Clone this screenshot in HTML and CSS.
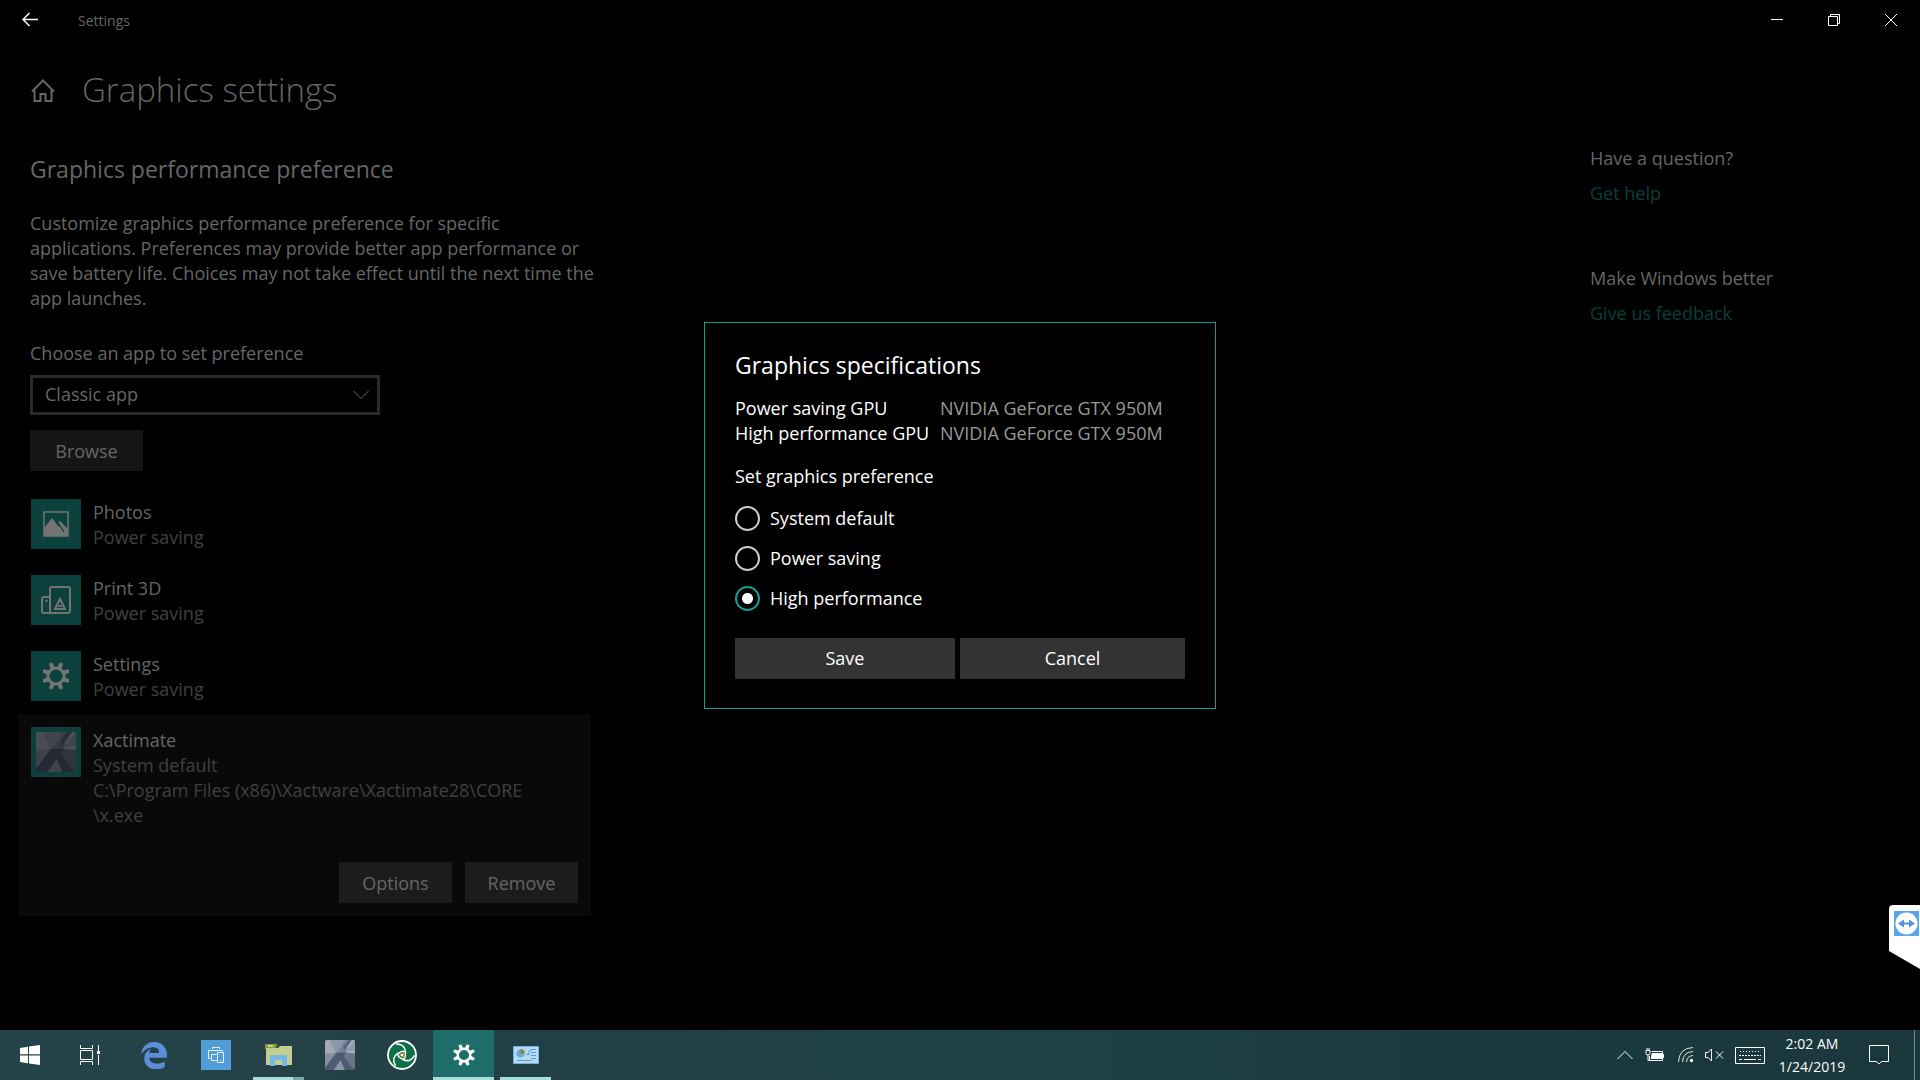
FILE: index.html
```html
<!DOCTYPE html>
<html lang="en">
<head>
<meta charset="utf-8">
<meta name="viewport" content="width=device-width, initial-scale=1">
<title>Settings</title>
<link rel="stylesheet" href="styles.css">
</head>
<body>
<svg class="defs" aria-hidden="true">
  <defs>
    <linearGradient id="x-base" x1="0" y1="0" x2="1" y2="1">
      <stop offset="0" stop-color="#9aa6b5"/><stop offset=".5" stop-color="#717f94"/><stop offset="1" stop-color="#4a586e"/>
    </linearGradient>
    <symbol id="gear" viewBox="0 0 28 28">
      <circle cx="14" cy="14" r="8" fill="none" stroke="currentColor" stroke-width="3"/>
      <g fill="currentColor">
        <path id="tooth" d="M12.2 0h3.6l.6 5.5h-4.800z" transform="rotate(22.5 14 14)"/>
        <use href="#tooth" transform="rotate(45 14 14)"/><use href="#tooth" transform="rotate(90 14 14)"/>
        <use href="#tooth" transform="rotate(135 14 14)"/><use href="#tooth" transform="rotate(180 14 14)"/>
        <use href="#tooth" transform="rotate(225 14 14)"/><use href="#tooth" transform="rotate(270 14 14)"/>
        <use href="#tooth" transform="rotate(315 14 14)"/>
      </g>
    </symbol>
    <symbol id="xact" viewBox="0 0 40 40">
      <clipPath id="x-clip"><rect width="40" height="40" rx="3"/></clipPath>
      <g clip-path="url(#x-clip)">
        <rect width="40" height="40" fill="url(#x-base)"/>
        <path d="M0 0h6l9 17L0 19z" fill="#a3aab4"/>
        <path d="M6 0h20l-4 9-7 8z" fill="#8b98ac"/>
        <path d="M31 0h9v18l-12-1z" fill="#a9b0b9"/>
        <path d="M40 0v14l-14 2z" fill="#8f9cb0"/>
        <path d="M24 9L31 0h5L26 14z" fill="#5a677c"/>
        <path d="M0 20l15-3 2 3L0 38z" fill="#858f9d"/>
        <path d="M40 19l-13-2-2 3 14 20h1z" fill="#6a7687"/>
        <path d="M15 17l13 0-3 4 11 19H28l-8-13-9 13H0v-3z" fill="#4d5b75"/>
        <path d="M12 40l9-13 5 13z" fill="#8d98a8"/>
      </g>
    </symbol>
  </defs>
</svg>

<div class="window">
  <header class="titlebar">
    <button class="caption-btn" aria-label="Back"><svg width="16" height="16" viewBox="0 0 16 16"><path d="M16 7.500H1M7.500 1L1 7.500 7.500 14"/></svg></button>
    <span class="titlebar-name">Settings</span>
    <div class="caption-group">
      <button class="caption-btn" aria-label="Minimize"><svg width="12" height="12" viewBox="0 0 12 12"><path class="thin" d="M0 5.500h12"/></svg></button>
      <button class="caption-btn" aria-label="Restore"><svg width="12" height="12" viewBox="0 0 12 12"><path class="thin" d="M.5 2.500h9v9h-9zM2.500 2.500v-2h9v9h-2"/></svg></button>
      <button class="caption-btn" aria-label="Close"><svg width="12" height="12" viewBox="0 0 12 12"><path class="thin" d="M0 0l12 12M12 0L0 12"/></svg></button>
    </div>
  </header>

  <div class="page-head">
    <svg class="home" width="24" height="24" viewBox="0 0 24 24"><path d="M1 13.500L12 2.500l11 11M3.500 11.500V23h6v-7h5v7h6V11.500"/></svg>
    <h1>Graphics settings</h1>
  </div>

  <div class="columns">
    <main class="content">
      <h2>Graphics performance preference</h2>
      <p class="intro">Customize graphics performance preference for specific applications. Preferences may provide better app performance or save battery life. Choices may not take effect until the next time the app launches.</p>
      <label class="field-label" for="app-kind">Choose an app to set preference</label>
      <div class="select-wrap">
        <select id="app-kind"><option>Classic app</option><option>Universal app</option></select>
        <svg class="chevron" width="16" height="10" viewBox="0 0 16 10"><path d="M.5 1L8 8.500 15.500 1"/></svg>
      </div>
      <button class="btn browse">Browse</button>

      <ul class="apps">
        <li class="app">
          <div class="tile"><svg width="26" height="26" viewBox="0 0 26 26"><path fill="none" stroke="currentColor" stroke-width="1.500" d="M1 1h24v24H1z"/><path fill="currentColor" d="M1 17L9 7l7 9 1-1-2-4 2-1 8 8v7H1z"/><path stroke="#0b403c" stroke-width="1.200" fill="none" d="M15 12l6 9"/></svg></div>
          <div class="app-text"><div class="name">Photos</div><div class="pref">Power saving</div></div>
        </li>
        <li class="app">
          <div class="tile"><svg width="30" height="28" viewBox="0 0 30 28"><g fill="none" stroke="currentColor" stroke-width="2"><rect x="9" y="1" width="20" height="26" rx="2"/><path d="M9 11H3q-2 0-2 2v12q0 2 2 2h7M19 13l-5 10h10zM17 20h4"/></g><circle cx="5.500" cy="15" r="1.200" fill="currentColor"/></svg></div>
          <div class="app-text"><div class="name">Print 3D</div><div class="pref">Power saving</div></div>
        </li>
        <li class="app">
          <div class="tile"><svg width="28" height="28"><use href="#gear"/></svg></div>
          <div class="app-text"><div class="name">Settings</div><div class="pref">Power saving</div></div>
        </li>
        <li class="app selected">
          <div class="tile"><svg class="dim" width="40" height="40"><use href="#xact"/></svg></div>
          <div class="app-text"><div class="name">Xactimate</div><div class="pref">System default<br>C:\Program Files (x86)\Xactware\Xactimate28\CORE<wbr>\x.exe</div></div>
          <div class="actions"><button class="btn">Options</button><button class="btn">Remove</button></div>
        </li>
      </ul>
    </main>

    <aside class="help">
      <section><h3>Have a question?</h3><a href="#help">Get help</a></section>
      <section><h3>Make Windows better</h3><a href="#feedback">Give us feedback</a></section>
    </aside>
  </div>

  <div class="overlay">
    <form class="dialog" role="dialog" aria-labelledby="dlg-title">
      <h2 id="dlg-title">Graphics specifications</h2>
      <dl class="specs">
        <dt>Power saving GPU</dt><dd>NVIDIA GeForce GTX 950M</dd>
        <dt>High performance GPU</dt><dd>NVIDIA GeForce GTX 950M</dd>
      </dl>
      <fieldset>
        <legend>Set graphics preference</legend>
        <label><input type="radio" name="gpu">System default</label>
        <label><input type="radio" name="gpu">Power saving</label>
        <label><input type="radio" name="gpu" checked>High performance</label>
      </fieldset>
      <div class="dialog-buttons"><button type="button" class="btn">Save</button><button type="button" class="btn">Cancel</button></div>
    </form>
  </div>

  <button class="teamviewer" aria-label="TeamViewer">
    <svg width="31" height="64" viewBox="0 0 31 64"><path d="M4 0h27v64L0 46V4q0-4 4-4z" fill="#fff"/><rect x="5" y="6" width="25" height="25" fill="#58a6ea"/><circle cx="17.500" cy="18.500" r="11" fill="#fff"/><path d="M9 18.500l6-4v3h5v-3l6 4-6 4v-3h-5v3z" fill="#5a8fe0"/></svg>
  </button>
</div>

<footer class="taskbar">
  <nav class="tasks">
    <button class="task start" aria-label="Start"><svg width="20" height="20" viewBox="0 0 20 20"><path fill="#fff" d="M0 3l8-1.200V9.300H0zM9 1.600L20 0v9.300H9zM0 10.500h8V18.200L0 17zM9 10.500h11V20L9 18.400z"/></svg></button>
    <button class="task view" aria-label="Task View"><svg width="20" height="20" viewBox="0 0 20 20"><path fill="none" stroke="#fff" d="M.5 0v3.500h12V0M.5 20v-3.500h12V20M.5 5.500h12v9H.5zM18.500 0v6M18.500 10v10"/><path fill="#fff" d="M17 6h3v3h-3z"/></svg></button>
    <button class="task" aria-label="Microsoft Edge"><svg width="26" height="27" viewBox="25 8 462 492" preserveAspectRatio="none"><path fill="#5b8fd8" d="M486.286 243.671c0-44.032-7.754-84.465-28.801-122.405C416.498 47.879 343.912 8.001 258.893 8.001 118.962 7.724 40.617 113.214 26.056 227.679c42.429-61.312 117.073-121.376 220.375-124.966 0 0 109.666 0 99.419 104.957H169.997c6.369-37.386 18.554-58.986 34.339-78.926-75.048 34.893-121.850 96.096-120.742 188.315.83 71.448 50.124 144.836 120.743 171.976 83.357 31.847 192.776 7.200 240.132-21.324V363.307c-80.864 56.494-270.871 60.925-272.255-67.572h314.073z"/></svg></button>
    <button class="task" aria-label="Device assistant"><svg width="30" height="30" viewBox="0 0 30 30"><path fill="#519dd6" d="M0 0h30v30H0z"/><path fill="none" stroke="#e6f3fc" d="M11.500 9V7.500h7V9M9.500 18.500h-2v-8h14v1M15.500 14.500h-5v6h5.500M16.500 12.500h6v10h-6z"/><path fill="#e6f3fc" d="M19 20h1v1h-1z"/></svg></button>
    <button class="task open stacked" aria-label="File Explorer"><svg width="27" height="22" viewBox="0 0 27 22"><path fill="#8c9b3b" d="M1 0h10l2 2h-2v3H0V1z"/><path fill="#c1cd91" d="M1 4h12l2-2h12v19H1z"/><path fill="#fff" d="M3 1.500h5v1H3z"/><path fill="#76b7e3" d="M5 22V12.500Q5 11 6.500 11h14q1.500 0 1.500 1.500V22h-5v-6h-7v6z"/></svg></button>
    <button class="task" aria-label="Xactimate"><svg width="30" height="30"><use href="#xact"/></svg></button>
    <button class="task" aria-label="Shutter"><svg width="30" height="30" viewBox="0 0 30 30"><circle cx="15" cy="15" r="14" fill="#0c7048" stroke="#fff" stroke-width="1.800"/><g fill="none" stroke="#fff" stroke-width="1.500"><path id="blade" d="M9 4Q18 4 18.500 12q-4-2-7 1.500"/><use href="#blade" transform="rotate(120 15 15)"/><use href="#blade" transform="rotate(240 15 15)"/></g><path fill="#b59a52" d="M11.500 15l6-3.500v7z"/><path fill="#fff" d="M14 14h2v2h-2z"/></svg></button>
    <button class="task open active" aria-label="Settings"><svg width="22" height="22"><use href="#gear"/></svg></button>
    <button class="task open" aria-label="Control Panel"><svg width="26" height="18" viewBox="0 0 26 18"><path fill="#b4dcf8" stroke="#79b0e2" d="M.5.500h25v17H.5z"/><circle cx="7.500" cy="7.500" r="4" fill="#70a8dc"/><path fill="#7b8b3c" d="M7.500 7.500V3a4.500 4.500 0 0 1 4.500 4.500z"/><path stroke="#5b9bd5" fill="none" d="M13 8.500h3v-4h2M18 3.500h5M18 6.500h5M18 9.500h5M18 12.500h5M4 14.500h15"/><path fill="#c5a550" d="M12 13.500h2v2h-2z"/></svg></button>
  </nav>
  <div class="tray">
    <svg width="16" height="10" viewBox="0 0 16 10"><path d="M.5 9L8 1.500 15.500 9"/></svg>
    <svg class="battery" width="20" height="14" viewBox="0 0 20 14"><path d="M6.500 3.500h11v9h-13V8M18.500 6v4M1 2.500h4v3Q5 7 3 7T1 5.500zM2 0v2M4 0v2M3 7v5.500h2"/><path fill="#fff" d="M7 5h10v6H6V8z"/></svg>
    <svg class="wifi" width="16" height="16" viewBox="0 0 16 16"><g opacity=".85"><path d="M.5 15Q1 1 15 .5M4.500 15Q5 5 15 4.500M8.500 15Q9 9 15 8.500"/></g><circle cx="13.500" cy="13.500" r="1.700" fill="#fff" stroke="none"/></svg>
    <svg class="volume" width="19" height="14" viewBox="0 0 19 14"><path d="M.5 4.500h2.500L6.500 1v12L3 9.500H.5zM11 3.500l7 7M18 3.500l-7 7"/></svg>
    <svg class="keyboard" width="30" height="17" viewBox="0 0 30 17"><path d="M.5.500h29v16H.5z"/><path stroke-dasharray="1 2" d="M5 4.500h20"/><path stroke-dasharray="2 1" d="M4 8.500h22"/><path d="M4 12.500h3M9 12.500h12M23 12.500h3"/></svg>
    <div class="clock"><span>2:02 AM</span><span>1/24/2019</span></div>
    <svg class="notify" width="20" height="20" viewBox="0 0 20 20"><path d="M.5.500h19v16h-7L10 19l-2.500-2.500h-7z"/></svg>
  </div>
</footer>
</body>
</html>
```
FILE: styles.css
```css
* { box-sizing: border-box; }

body {
  margin: 0;
  min-height: 100vh;
  display: flex;
  flex-direction: column;
  background: #000;
  color: #666;
  font-family: "Open Sans", "Noto Sans", sans-serif;
  font-size: 18px;
  line-height: 25px;
}

h1, h2, h3, p, dl, dd, ul, fieldset, legend { margin: 0; padding: 0; border: 0; font-weight: 400; }
h3 { font-size: 18px; }
button, select, input { font: inherit; color: inherit; margin: 0; }
button { border: 0; padding: 0; background: none; }
svg { display: block; flex: none; }
.defs { position: absolute; width: 0; height: 0; }

.window { position: relative; flex: 1; display: flex; flex-direction: column; }

.titlebar { display: flex; align-items: center; height: 40px; padding-right: 1px; font-size: 14px; }
.titlebar-name { margin-left: 18px; }
.caption-btn { display: flex; align-items: center; justify-content: center; width: 57px; height: 40px; }
.titlebar > .caption-btn { width: 60px; }
.caption-btn path { fill: none; stroke: #fff; stroke-width: 1.5; }
.caption-btn path.thin { stroke-width: 1; }
.caption-group { display: flex; margin-left: auto; }

.page-head { display: flex; align-items: center; gap: 27px; padding: 25px 31px 0; }
.home path { fill: none; stroke: #666; stroke-width: 2; }
h1 { font-size: 33px; font-weight: 300; line-height: 50px; }

.columns { display: flex; justify-content: space-between; }
.content { width: 591px; padding: 38px 0 0 18px; }
.content > :not(.apps) { margin-left: 12px; }
h2 { font-size: 23px; line-height: 32px; }
.content > h2 { margin-left: 11px; }
.intro { width: 568px; margin-top: 26px; }
.field-label { display: block; margin-top: 30px; }

.select-wrap { display: flex; align-items: center; width: 350px; margin-top: 9px; }
select {
  width: 100%;
  height: 40px;
  padding: 0 12px 2px;
  border: 3px solid #2b2b2b;
  border-radius: 0;
  background: #000;
  appearance: none;
}
.chevron { margin-left: -27px; pointer-events: none; }
.chevron path { fill: none; stroke: #666; }

.btn { width: 113px; height: 41px; padding-top: 1px; background: #151515; }
.browse { margin-top: 15px; }

.apps { list-style: none; margin-top: 15px; }
.app { display: flex; flex-wrap: wrap; gap: 12px; padding: 13px; min-height: 76px; }
.app:not(.selected) { height: 76px; }
.app-text { flex: 1; padding: 1px 30px 0 0; }
.tile { display: flex; align-items: center; justify-content: center; width: 50px; height: 50px; background: #0b403c; color: #737373; }
.dim { filter: brightness(.45); }
.pref { color: #404040; }
.selected { background: #090909; }
.selected .btn { background: #1c1c1c; }
.actions { display: flex; justify-content: flex-end; gap: 13px; width: 100%; margin-top: 22px; }

.help { width: 330px; padding-top: 31px; }
.help section { margin-bottom: 60px; }
.help a { display: block; margin-top: 10px; color: #0a3f3c; text-decoration: none; }

.overlay { position: absolute; inset: 0; display: grid; place-items: center; }
.dialog { width: 512px; padding: 26px 30px 29px; border: 1px solid #189b94; background: #000; color: #fff; }
.specs { display: grid; grid-template-columns: 205px 1fr; margin-top: 15px; }
.specs dd { color: #999; }
fieldset { margin-top: 18px; }
legend { padding-bottom: 3px; }
fieldset label { display: flex; align-items: center; gap: 10px; height: 26px; margin-top: 14px; }
input[type="radio"] {
  appearance: none;
  width: 25px;
  height: 25px;
  border: 2px solid #ccc;
  border-radius: 50%;
}
input[type="radio"]:checked { border-color: #189b94; background: radial-gradient(circle, #fff 5px, transparent 6px); }
.dialog-buttons { display: grid; grid-template-columns: 220px 1fr; gap: 5px; margin-top: 26px; }
.dialog .btn { width: 100%; background: #333; }

.teamviewer { position: absolute; right: 0; bottom: 61px; }

.taskbar {
  display: flex;
  justify-content: space-between;
  height: 50px;
  background: linear-gradient(90deg, #25434a, #223f45 30%, #1d4346 50%, #1a3a3f 75%, #1a373c);
  color: #fff;
}
.tasks { display: flex; }
.task { display: flex; align-items: center; justify-content: center; width: 62px; height: 50px; }
.start { width: 60px; }
.view { width: 60px; margin-right: 3px; }
.open { width: 51px; margin: 0 5px 0 6px; box-shadow: inset 0 -3px #a6dcda; }
.stacked { background: linear-gradient(90deg, #a6dcda 40px, #7da6a8 40px) bottom / 100% 3px no-repeat; box-shadow: none; }
.active { width: 61px; margin: 0; background: #1f6d6a; }

.tray { display: flex; align-items: center; padding-right: 5px; }
.tray path { fill: none; stroke: #fff; }
.battery { margin-left: 12px; }
.tray .battery path + path { fill: #fff; stroke: none; }
.wifi { margin-left: 13px; }
.volume { margin-left: 11px; }
.keyboard { margin-left: 11px; }
.clock { display: flex; flex-direction: column; width: 94px; font-size: 14px; line-height: 23px; text-align: center; }
.notify { margin: 0 25px 0 10px; }
.tray::after { content: ""; width: 1px; height: 50px; background: #77898b; }
```
